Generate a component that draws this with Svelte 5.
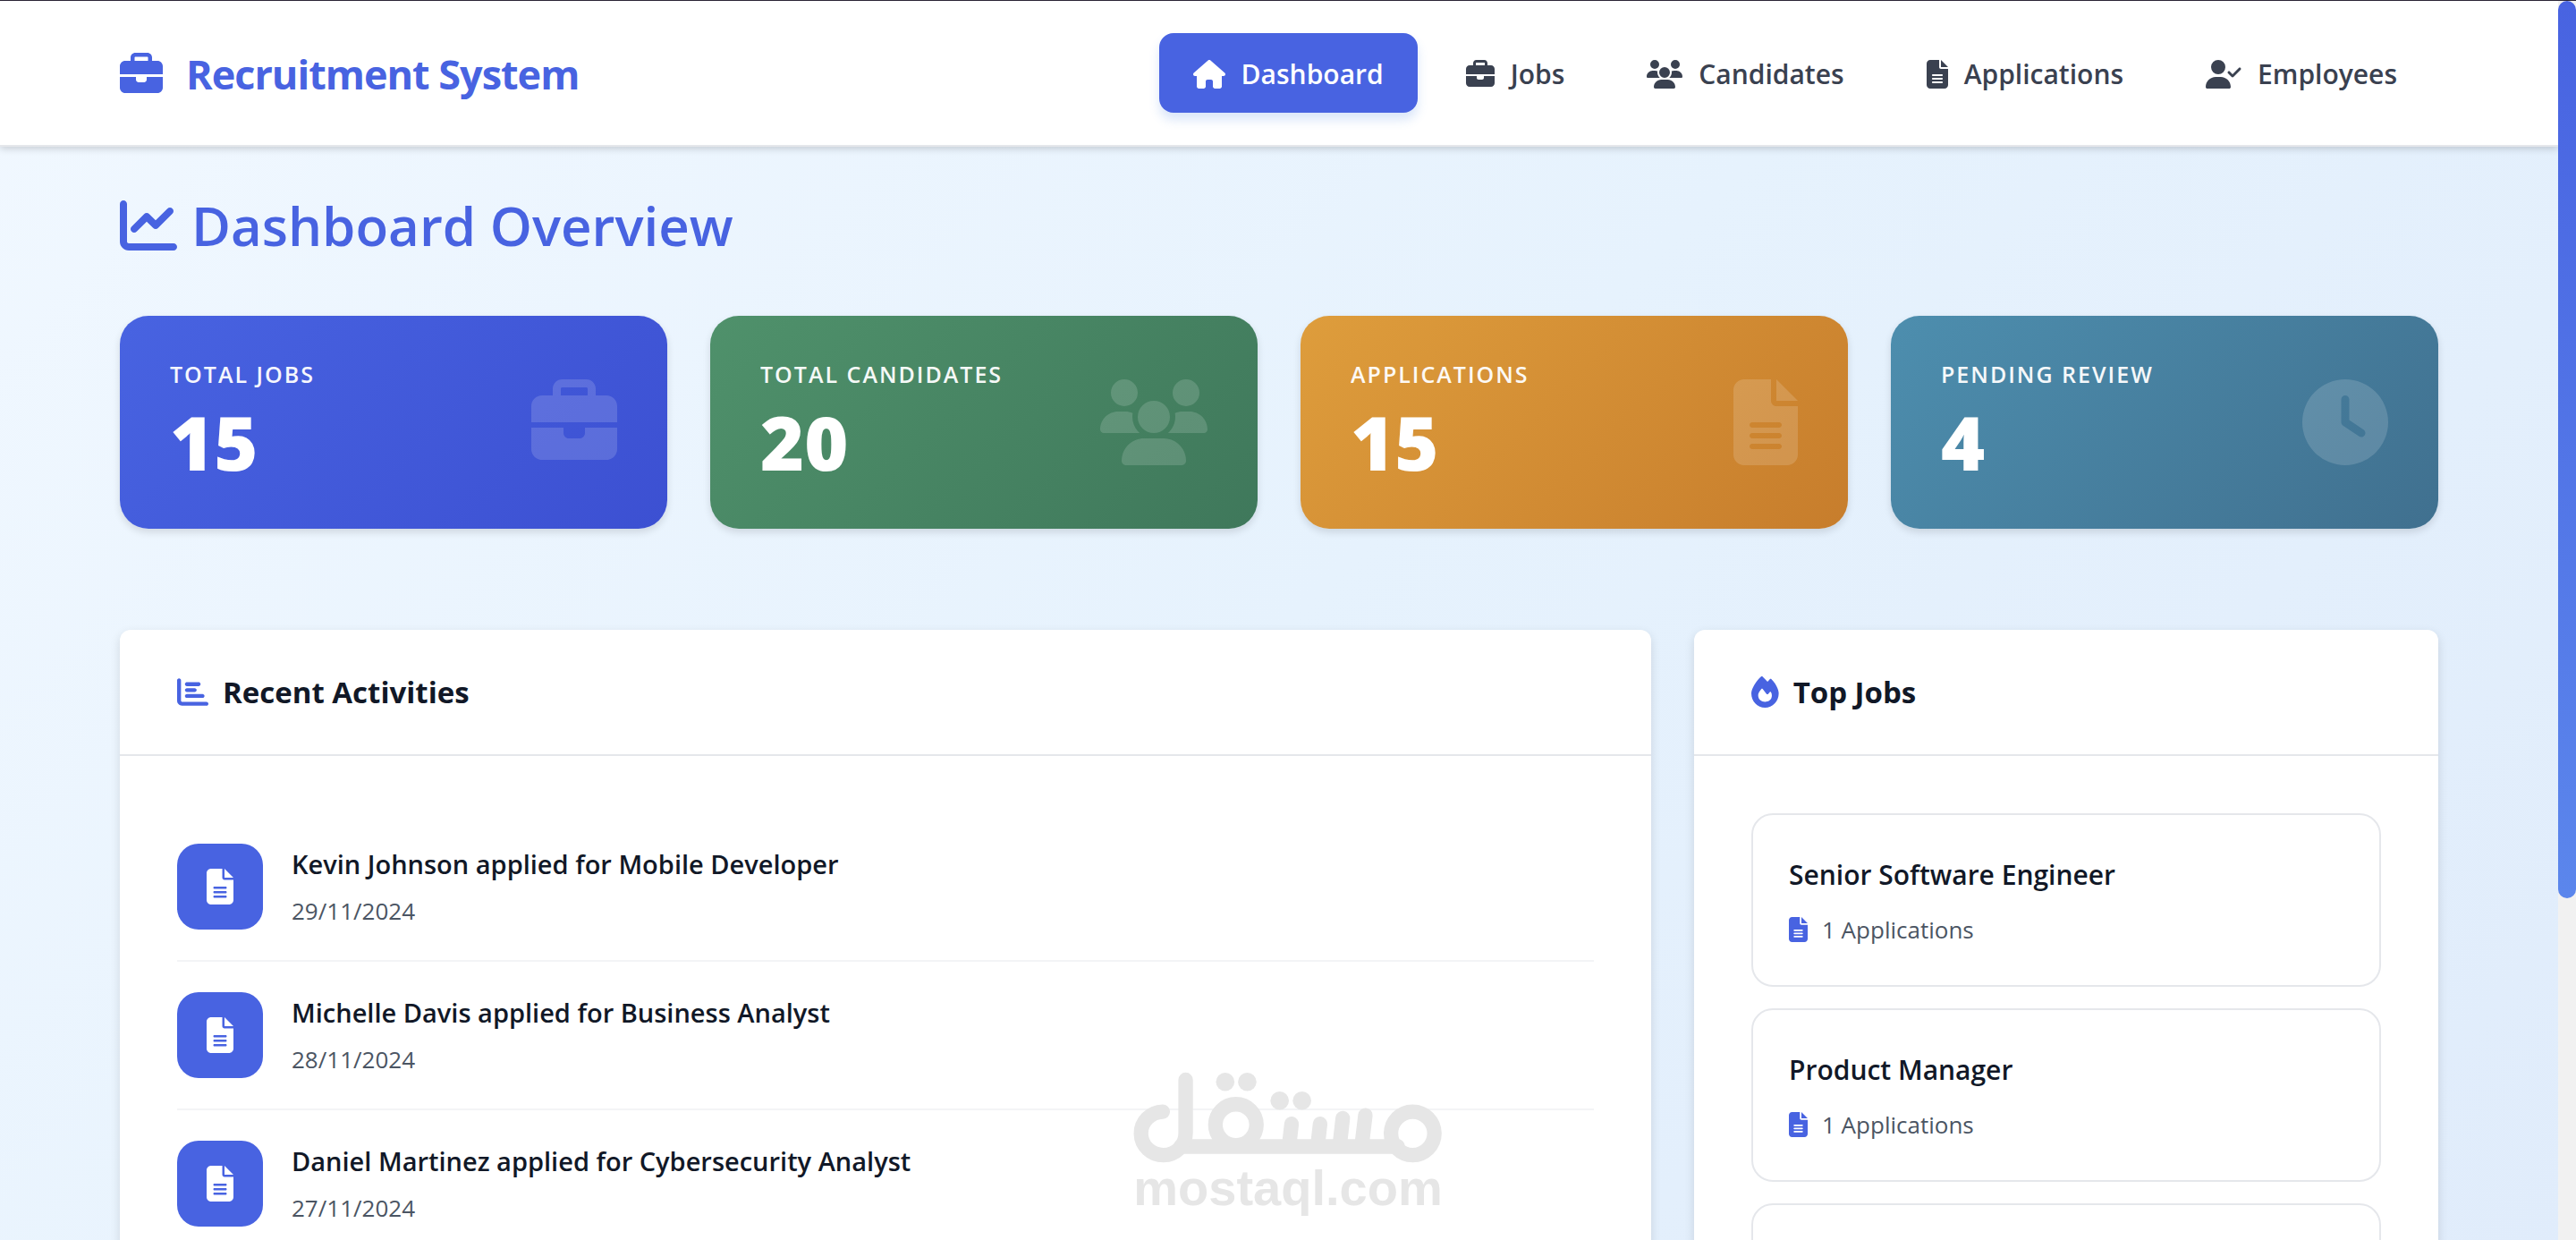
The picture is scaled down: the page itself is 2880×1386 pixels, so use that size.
<script>
  // Solid icons: width of the viewBox (height is always 512) and path
  const icons = {
    briefcase: { w: 512, d: 'M184 48H328c4.4 0 8 3.6 8 8V96H176V56c0-4.4 3.6-8 8-8zm-56 8V96H64C28.7 96 0 124.7 0 160v96H192 320 512V160c0-35.3-28.7-64-64-64H384V56c0-30.9-25.1-56-56-56H184c-30.9 0-56 25.1-56 56zM512 288H320v32c0 17.7-14.3 32-32 32H224c-17.7 0-32-14.3-32-32V288H0V416c0 35.3 28.7 64 64 64H448c35.3 0 64-28.7 64-64V288z' },
    home: { w: 576, d: 'M575.8 255.5c0 18-15 32.1-32 32.1h-32l.7 160.2c0 2.7-.2 5.4-.5 8.1V472c0 22.1-17.9 40-40 40H456c-1.1 0-2.2 0-3.3-.1c-1.4 .1-2.8 .1-4.2 .1H416 392c-22.1 0-40-17.9-40-40V448 384c0-17.7-14.3-32-32-32H256c-17.7 0-32 14.3-32 32v64 24c0 22.1-17.9 40-40 40H160 128.1c-1.5 0-3-.1-4.5-.2c-1.2 .1-2.4 .2-3.6 .2H104c-22.1 0-40-17.9-40-40V360c0-.9 0-1.9 .1-2.8V287.6H32c-18 0-32-14-32-32.1c0-9 3-17 10-24L266.4 8c7-7 15-8 22-8s15 2 21 7L564.8 231.5c8 7 12 15 11 24z' },
    users: { w: 640, d: 'M144 0a80 80 0 1 1 0 160A80 80 0 1 1 144 0zM512 0a80 80 0 1 1 0 160A80 80 0 1 1 512 0zM0 298.7C0 239.8 47.8 192 106.7 192h42.7c15.9 0 31 3.5 44.6 9.7c-1.3 7.2-1.9 14.7-1.9 22.3c0 38.2 16.8 72.5 43.3 96c-.2 0-.4 0-.7 0H21.3C9.6 320 0 310.4 0 298.7zM405.3 320c-.2 0-.4 0-.7 0c26.6-23.5 43.3-57.8 43.3-96c0-7.6-.7-15-1.9-22.3c13.6-6.3 28.7-9.7 44.6-9.7h42.7C592.2 192 640 239.8 640 298.7c0 11.8-9.6 21.3-21.3 21.3H405.3zM224 224a96 96 0 1 1 192 0 96 96 0 1 1 -192 0zM128 485.3C128 411.7 187.7 352 261.3 352H378.7C452.3 352 512 411.7 512 485.3c0 14.7-11.9 26.7-26.7 26.7H154.7c-14.7 0-26.7-11.9-26.7-26.7z' },
    file: { w: 384, d: 'M64 0C28.7 0 0 28.7 0 64V448c0 35.3 28.7 64 64 64H320c35.3 0 64-28.7 64-64V160H256c-17.7 0-32-14.3-32-32V0H64zM256 0V128H384L256 0zM112 256H272c8.8 0 16 7.2 16 16s-7.2 16-16 16H112c-8.8 0-16-7.2-16-16s7.2-16 16-16zm0 64H272c8.8 0 16 7.2 16 16s-7.2 16-16 16H112c-8.8 0-16-7.2-16-16s7.2-16 16-16zm0 64H272c8.8 0 16 7.2 16 16s-7.2 16-16 16H112c-8.8 0-16-7.2-16-16s7.2-16 16-16z' },
    userCheck: { w: 640, d: 'M96 128a128 128 0 1 1 256 0A128 128 0 1 1 96 128zM0 482.3C0 383.8 79.8 304 178.3 304h91.4C368.2 304 448 383.8 448 482.3c0 16.4-13.3 29.7-29.7 29.7H29.7C13.3 512 0 498.7 0 482.3zM625 177L497 305c-9.4 9.4-24.6 9.4-33.9 0l-64-64c-9.4-9.4-9.4-24.6 0-33.9s24.6-9.4 33.9 0l47 47L591 143c9.4-9.4 24.6-9.4 33.9 0s9.4 24.6 0 33.9z' },
    chartLine: { w: 512, d: 'M64 64c0-17.7-14.3-32-32-32S0 46.3 0 64V400c0 44.2 35.8 80 80 80H480c17.7 0 32-14.3 32-32s-14.3-32-32-32H80c-8.8 0-16-7.2-16-16V64zm406.6 86.6c12.5-12.5 12.5-32.8 0-45.3s-32.8-12.5-45.3 0L320 210.7l-57.4-57.4c-12.5-12.5-32.8-12.5-45.3 0l-112 112c-12.5 12.5-12.5 32.8 0 45.3s32.8 12.5 45.3 0L240 221.3l57.4 57.4c12.5 12.5 32.8 12.5 45.3 0l128-128z' },
    clock: { w: 512, d: 'M256 0a256 256 0 1 1 0 512A256 256 0 1 1 256 0zM232 120V256c0 8 4 15.5 10.7 20l96 64c11 7.4 25.9 4.4 33.3-6.7s4.4-25.9-6.7-33.3L280 243.2V120c0-13.3-10.7-24-24-24s-24 10.7-24 24z' },
    chartBar: { w: 512, d: 'M32 32c17.7 0 32 14.3 32 32V400c0 8.8 7.2 16 16 16H480c17.7 0 32 14.3 32 32s-14.3 32-32 32H80c-44.2 0-80-35.8-80-80V64C0 46.3 14.3 32 32 32zm96 96c0-17.7 14.3-32 32-32l192 0c17.7 0 32 14.3 32 32s-14.3 32-32 32H160c-17.7 0-32-14.3-32-32zm32 64H288c17.7 0 32 14.3 32 32s-14.3 32-32 32H160c-17.7 0-32-14.3-32-32s14.3-32 32-32zm0 96H416c17.7 0 32 14.3 32 32s-14.3 32-32 32H160c-17.7 0-32-14.3-32-32s14.3-32 32-32z' },
    fire: { w: 448, d: 'M159.3 5.4c7.8-7.3 19.9-7.2 27.7 .1c27.6 25.9 53.5 53.8 77.7 84c11-14.4 23.5-30.1 37-42.9c7.9-7.4 20.1-7.4 28 .1c34.6 33 63.9 76.6 84.5 118c20.3 40.8 33.8 82.5 33.8 111.9C448 404.2 348.2 512 224 512C98.4 512 0 404.1 0 276.5c0-38.4 17.8-85.3 45.4-131.7C73.3 97.7 112.7 48.6 159.3 5.4zM225.7 416c25.3 0 47.7-7 68.8-21c42.1-29.4 53.4-88.2 28.1-134.4c-4.5-9-16-9.6-22.5-2l-25.2 29.3c-6.6 7.6-18.5 7.4-24.7-.5c-16.5-21-46-58.5-62.8-79.8c-6.3-8-18.3-8.1-24.7-.1c-33.8 42.5-50.8 69.3-50.8 99.4C112 375.4 162.6 416 225.7 416z' }
  };

  const links = [
    { label: 'Dashboard', icon: 'home', active: true },
    { label: 'Jobs', icon: 'briefcase' },
    { label: 'Candidates', icon: 'users' },
    { label: 'Applications', icon: 'file' },
    { label: 'Employees', icon: 'userCheck' }
  ];

  const stats = [
    { label: 'Total Jobs', value: 15, icon: 'briefcase', tone: 'blue' },
    { label: 'Total Candidates', value: 20, icon: 'users', tone: 'green' },
    { label: 'Applications', value: 15, icon: 'file', tone: 'orange' },
    { label: 'Pending Review', value: 4, icon: 'clock', tone: 'teal' }
  ];

  const activities = [
    { text: 'Kevin Johnson applied for Mobile Developer', date: '29/11/2024' },
    { text: 'Michelle Davis applied for Business Analyst', date: '28/11/2024' },
    { text: 'Daniel Martinez applied for Cybersecurity Analyst', date: '27/11/2024' }
  ];

  const jobs = [
    { title: 'Senior Software Engineer', count: 1 },
    { title: 'Product Manager', count: 1 }
  ];
</script>

{#snippet icon(name)}
  <svg class="icon" viewBox="0 0 {icons[name].w} 512" aria-hidden="true">
    <path d={icons[name].d} />
  </svg>
{/snippet}

<div class="app">
  <header class="navbar">
    <div class="container navbar-inner">
      <a class="brand" href="#home">
        {@render icon('briefcase')}
        <span>Recruitment System</span>
      </a>
      <nav>
        {#each links as link}
          <a class="nav-link" class:active={link.active} href="#{link.label.toLowerCase()}">
            {@render icon(link.icon)}
            <span>{link.label}</span>
          </a>
        {/each}
      </nav>
    </div>
  </header>

  <main class="container">
    <h1>{@render icon('chartLine')}<span>Dashboard Overview</span></h1>

    <section class="stats">
      {#each stats as stat}
        <div class="stat {stat.tone}">
          <div>
            <div class="stat-label">{stat.label}</div>
            <div class="stat-value">{stat.value}</div>
          </div>
          {@render icon(stat.icon)}
        </div>
      {/each}
    </section>

    <div class="panels">
      <section class="panel activities">
        <h2>{@render icon('chartBar')}<span>Recent Activities</span></h2>
        <ul>
          {#each activities as activity}
            <li class="activity">
              <div class="activity-icon">{@render icon('file')}</div>
              <div>
                <div class="activity-text">{activity.text}</div>
                <div class="activity-date">{activity.date}</div>
              </div>
            </li>
          {/each}
        </ul>
      </section>

      <section class="panel top-jobs">
        <h2>{@render icon('fire')}<span>Top Jobs</span></h2>
        <ul>
          {#each jobs as job}
            <li class="job">
              <h3>{job.title}</h3>
              <p>{@render icon('file')}<span>{job.count} Applications</span></p>
            </li>
          {/each}
          <li class="job"></li>
        </ul>
      </section>
    </div>
  </main>

  <div class="watermark">
    <svg viewBox="141 115 1040 307" aria-hidden="true">
      <g class="strokes">
        <circle cx="1080" cy="322" r="73" />
        <circle cx="486" cy="293" r="69" />
        <path d="M300 366H1030M673 290L665 360M769 290L761 360M845 271L835 360M921 261L909 360" />
        <path d="M317 142V322A75 73 0 1 1 240 249" />
      </g>
      <circle cx="450" cy="149" r="31" />
      <circle cx="524" cy="149" r="31" />
      <circle cx="633" cy="212" r="31" />
      <circle cx="708" cy="212" r="31" />
    </svg>
    <span>mostaql.com</span>
  </div>

  <div class="scrollbar"><div class="thumb"></div></div>
</div>

<style>
  :global(body) {
    margin: 0;
    font-family: 'Segoe UI', 'Open Sans', 'Noto Sans', sans-serif;
    color: #111827;
  }

  .app {
    box-sizing: border-box;
    height: 100vh;
    padding-right: 20px;
    overflow: hidden;
    border-top: 1px solid #2b2536;
    background: linear-gradient(135deg, #f1f8ff 0%, #e6f2fd 50%, #e0ecfb 100%);
  }

  .container {
    box-sizing: border-box;
    max-width: 2640px;
    margin: 0 auto;
    padding: 0 24px;
  }

  .icon {
    height: 1em;
    flex: none;
    fill: currentColor;
  }

  ul {
    list-style: none;
    margin: 0;
    padding: 64px;
  }

  a {
    text-decoration: none;
  }

  /* Navbar */
  .navbar {
    position: relative;
    background: #fff;
    border-bottom: 2px solid #e5e7eb;
    box-shadow: 0 2px 8px rgba(0, 0, 0, 0.18);
  }

  .navbar-inner {
    display: flex;
    align-items: center;
    justify-content: space-between;
    padding-top: 36px;
    padding-bottom: 36px;
  }

  .brand {
    display: flex;
    align-items: center;
    gap: 26px;
    padding-top: 2px;
    font-size: 45px;
    font-weight: 700;
    letter-spacing: -1px;
    color: #4863e1;
  }

  .brand .icon {
    height: 48px;
  }

  nav {
    display: flex;
    gap: 16px;
    padding-right: 8px;
  }

  .nav-link {
    display: flex;
    align-items: center;
    gap: 18px;
    padding: 23px 38px 21px;
    border-radius: 16px;
    font-size: 30px;
    line-height: 45px;
    font-weight: 600;
    color: #3a4150;
  }

  .nav-link .icon {
    height: 32px;
  }

  .nav-link.active {
    background: #4863e1;
    color: #fff;
    box-shadow: 0 8px 12px rgba(72, 130, 225, 0.2);
  }

  /* Page title */
  h1 {
    display: flex;
    align-items: center;
    gap: 16px;
    margin: 0;
    padding: 48px 0 61px;
    font-size: 60px;
    line-height: 80px;
    font-weight: 600;
    color: #4863e1;
  }

  h1 .icon {
    height: 64px;
  }

  /* Stat cards */
  .stats {
    display: grid;
    grid-template-columns: repeat(4, 1fr);
    gap: 48px;
    margin-bottom: 113px;
  }

  .stat {
    display: flex;
    align-items: center;
    justify-content: space-between;
    padding: 48px 56px;
    border-radius: 32px;
    color: #fff;
    box-shadow: 0 4px 8px rgba(0, 0, 0, 0.12);
  }

  .blue {
    background: linear-gradient(135deg, #4863e1, #3c50d2);
  }

  .green {
    background: linear-gradient(135deg, #4f916b, #3f785b);
  }

  .orange {
    background: linear-gradient(135deg, #de9d3c, #c77d2c);
  }

  .teal {
    background: linear-gradient(135deg, #4d8eae, #40708f);
  }

  .stat-label {
    margin-bottom: 10px;
    font-size: 25px;
    line-height: 34px;
    font-weight: 600;
    letter-spacing: 2px;
    text-transform: uppercase;
    opacity: 0.95;
  }

  .stat-value {
    font-size: 84px;
    line-height: 98px;
    font-weight: 800;
  }

  .stat .icon {
    height: 96px;
    opacity: 0.15;
  }

  /* Panels */
  .panels {
    display: grid;
    grid-template-columns: repeat(12, 1fr);
    gap: 48px;
  }

  .panel {
    background: #fff;
    border-radius: 12px;
    box-shadow: 0 4px 12px rgba(0, 0, 0, 0.12);
  }

  .activities {
    grid-column: span 8;
  }

  .top-jobs {
    grid-column: span 4;
  }

  h2 {
    display: flex;
    align-items: center;
    gap: 16px;
    margin: 0;
    padding: 44px 64px;
    border-bottom: 2px solid #e5e7eb;
    font-size: 33px;
    line-height: 51px;
    font-weight: 700;
  }

  h2 .icon {
    height: 35px;
    color: #4863e1;
  }

  .activity {
    display: flex;
    align-items: center;
    gap: 32px;
    padding: 32px 0;
    border-bottom: 2px solid #f3f4f6;
  }

  .activity-icon {
    display: flex;
    align-items: center;
    justify-content: center;
    width: 96px;
    height: 96px;
    border-radius: 24px;
    background: #4863e1;
    color: #fff;
    font-size: 40px;
  }

  .activity-text {
    margin-bottom: 4px;
    font-size: 29px;
    line-height: 50px;
    font-weight: 600;
  }

  .activity-date {
    font-size: 26px;
    line-height: 46px;
    color: #4b5563;
  }

  .top-jobs ul {
    display: grid;
    gap: 24px;
  }

  .job {
    box-sizing: border-box;
    min-height: 194px;
    padding: 40px;
    border: 2px solid #e5e7eb;
    border-radius: 24px;
  }

  h3 {
    margin: 0 0 12px;
    font-size: 30px;
    line-height: 54px;
    font-weight: 600;
  }

  p {
    display: flex;
    align-items: center;
    gap: 16px;
    margin: 0;
    font-size: 26px;
    line-height: 44px;
    color: #4b5563;
  }

  p .icon {
    height: 28px;
    color: #4863e1;
  }

  /* Watermark over the page */
  .watermark {
    position: fixed;
    left: 50%;
    bottom: 30px;
    display: flex;
    flex-direction: column;
    align-items: center;
    transform: translateX(-50%);
    font-family: 'Liberation Sans', Arial, sans-serif;
    font-size: 56px;
    line-height: 56px;
    font-weight: 700;
    color: #e6e6e6;
  }

  .watermark svg {
    width: 346px;
    fill: currentColor;
  }

  .strokes {
    fill: none;
    stroke: currentColor;
    stroke-width: 49;
    stroke-linecap: round;
  }

  .scrollbar {
    position: fixed;
    top: 1px;
    right: 0;
    bottom: 0;
    width: 20px;
    background: #f1f1f1;
  }

  .thumb {
    height: 72.4%;
    border-radius: 10px;
    background: linear-gradient(#4863e1, #5b86ec);
  }
</style>
